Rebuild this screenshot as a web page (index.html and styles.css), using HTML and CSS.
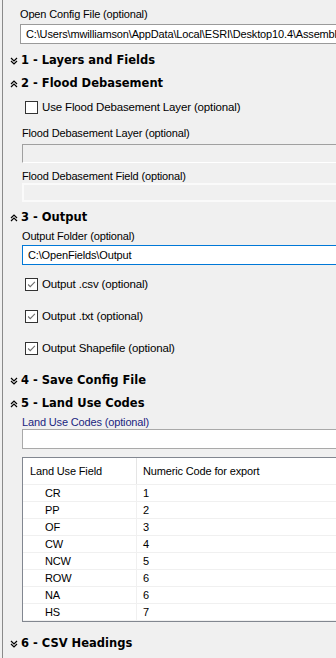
FILE: index.html
```html
<!DOCTYPE html>
<html lang="en">
<head>
  <meta charset="UTF-8">
  <title>Open Fields</title>
  <link rel="stylesheet" href="styles.css">
</head>
<body>
  <div class="panel">
    <div class="field first">
      <label>Open Config File (optional)</label>
      <div class="input">C:\Users\mwilliamson\AppData\Local\ESRI\Desktop10.4\Assembl</div>
    </div>

    <div class="section-head">
      <svg class="chev" viewBox="0 0 8 8"><path d="M1 1 L4 4 L7 1 M1 4 L4 7 L7 4"/></svg>
      1 - Layers and Fields
    </div>

    <div class="section-head">
      <svg class="chev" viewBox="0 0 8 8"><path d="M1 4 L4 1 L7 4 M1 7 L4 4 L7 7"/></svg>
      2 - Flood Debasement
    </div>
    <div class="check-row tight"><span class="box"></span>Use Flood Debasement Layer (optional)</div>
    <div class="field">
      <label>Flood Debasement Layer (optional)</label>
      <div class="input disabled sunken"></div>
    </div>
    <div class="field near">
      <label>Flood Debasement Field (optional)</label>
      <div class="input disabled flat"></div>
    </div>

    <div class="section-head">
      <svg class="chev" viewBox="0 0 8 8"><path d="M1 4 L4 1 L7 4 M1 7 L4 4 L7 7"/></svg>
      3 - Output
    </div>
    <div class="field">
      <label>Output Folder (optional)</label>
      <div class="input focus">C:\OpenFields\Output</div>
    </div>
    <div class="check-row"><span class="box checked"><svg viewBox="0 0 13 13"><path d="M2.5 6.5 L5 9 L10.5 3.5"/></svg></span>Output .csv (optional)</div>
    <div class="check-row"><span class="box checked"><svg viewBox="0 0 13 13"><path d="M2.5 6.5 L5 9 L10.5 3.5"/></svg></span>Output .txt (optional)</div>
    <div class="check-row"><span class="box checked"><svg viewBox="0 0 13 13"><path d="M2.5 6.5 L5 9 L10.5 3.5"/></svg></span>Output Shapefile (optional)</div>

    <div class="section-head">
      <svg class="chev" viewBox="0 0 8 8"><path d="M1 1 L4 4 L7 1 M1 4 L4 7 L7 4"/></svg>
      4 - Save Config File
    </div>

    <div class="section-head">
      <svg class="chev" viewBox="0 0 8 8"><path d="M1 4 L4 1 L7 4 M1 7 L4 4 L7 7"/></svg>
      5 - Land Use Codes
    </div>
    <div class="field">
      <label class="link">Land Use Codes (optional)</label>
      <div class="input white tall"></div>
    </div>
    <div class="grid">
      <table>
        <thead>
          <tr><th class="c1">Land Use Field</th><th>Numeric Code for export</th></tr>
        </thead>
        <tbody>
          <tr><td class="c1">CR</td><td>1</td></tr>
          <tr><td class="c1">PP</td><td>2</td></tr>
          <tr><td class="c1">OF</td><td>3</td></tr>
          <tr><td class="c1">CW</td><td>4</td></tr>
          <tr><td class="c1">NCW</td><td>5</td></tr>
          <tr><td class="c1">ROW</td><td>6</td></tr>
          <tr><td class="c1">NA</td><td>6</td></tr>
          <tr><td class="c1">HS</td><td>7</td></tr>
        </tbody>
      </table>
    </div>

    <div class="section-head last">
      <svg class="chev" viewBox="0 0 8 8"><path d="M1 1 L4 4 L7 1 M1 4 L4 7 L7 4"/></svg>
      6 - CSV Headings
    </div>
  </div>
</body>
</html>
```

FILE: styles.css
```css
html, body {
  margin: 0;
  height: 100%;
  background: #f0f0f0;
  overflow: hidden;
}
body {
  font-family: 'Liberation Sans', Arial, sans-serif;
  font-size: 11px;
  letter-spacing: -0.15px;
  color: #000;
}
.panel {
  margin-left: 2px;
  border-left: 1px solid #8a8a8a;
  min-height: 100%;
  overflow: hidden;
}
.field {
  padding-left: 19px;
  margin-top: 7px;
}
.field.first {
  padding-left: 17px;
}
.field.near {
  margin-top: 6px;
}
.section-head + .field {
  margin-top: 0;
}
.field label {
  display: block;
  line-height: 14px;
}
.field label.link {
  color: #1a2580;
}
.input {
  margin-top: 4px;
  margin-right: -20px;
  height: 18px;
  line-height: 18px;
  padding-left: 5px;
  border: 1px solid #a9a9a9;
  background: #fff;
  white-space: nowrap;
  overflow: hidden;
}
.field.first .input {
  margin-top: 3px;
  border-color: #9a9a9a;
}
.input.disabled {
  height: 17px;
  background: #f0f0f0;
}
.input.sunken {
  border-color: #a0a0a0 #fff #fff #a0a0a0;
}
.input.flat {
  margin-top: 0;
  border: 2px solid #fafafa;
  height: 15px;
}
.input.focus {
  margin-top: 2px;
  border-color: #0078d7;
}
.input.tall {
  margin-top: 0;
}
.section-head {
  height: 23px;
  line-height: 23px;
  padding-left: 7px;
  margin-top: 4px;
  font-family: 'DejaVu Sans', Verdana, sans-serif;
  font-weight: bold;
  font-size: 11.5px;
  letter-spacing: 0;
  display: flex;
  align-items: center;
  gap: 3px;
}
.check-row + .section-head {
  margin-top: 5px;
}
.section-head + .section-head {
  margin-top: 0;
}
.field.first + .section-head {
  margin-top: 5px;
}
.section-head.last {
  margin-top: 10px;
}
.chev {
  width: 8px;
  height: 8px;
  fill: none;
  stroke: #000;
  stroke-width: 1.2;
}
.check-row {
  height: 32px;
  display: flex;
  align-items: center;
  padding-left: 22px;
  gap: 4px;
  font-size: 11.5px;
}
.check-row.tight {
  height: 24px;
}
.field + .check-row {
  margin-top: 3px;
}
.box {
  width: 11px;
  height: 11px;
  border: 1px solid #333;
  background: #fff;
  display: inline-block;
}
.box svg {
  display: block;
  width: 11px;
  height: 11px;
  fill: none;
  stroke: #6d6d6d;
  stroke-width: 1.3;
}
.grid {
  margin: 8px -20px 0 19px;
  border: 1px solid #828790;
  background: #fff;
}
.grid table {
  border-collapse: collapse;
  width: 100%;
}
.grid th {
  height: 26px;
  font-weight: normal;
  text-align: left;
  padding: 0 0 0 6px;
  border-left: 1px solid #e5e5e5;
  border-bottom: 1px solid #f0f0f0;
}
.grid th.c1 {
  width: 106px;
  padding-left: 7px;
  border-left: none;
}
.grid td {
  height: 16px;
  padding: 0 0 0 6px;
  border-left: 1px solid #f0f0f0;
  border-bottom: 1px solid #f0f0f0;
}
.grid td.c1 {
  padding-left: 22px;
  border-left: none;
}
```
